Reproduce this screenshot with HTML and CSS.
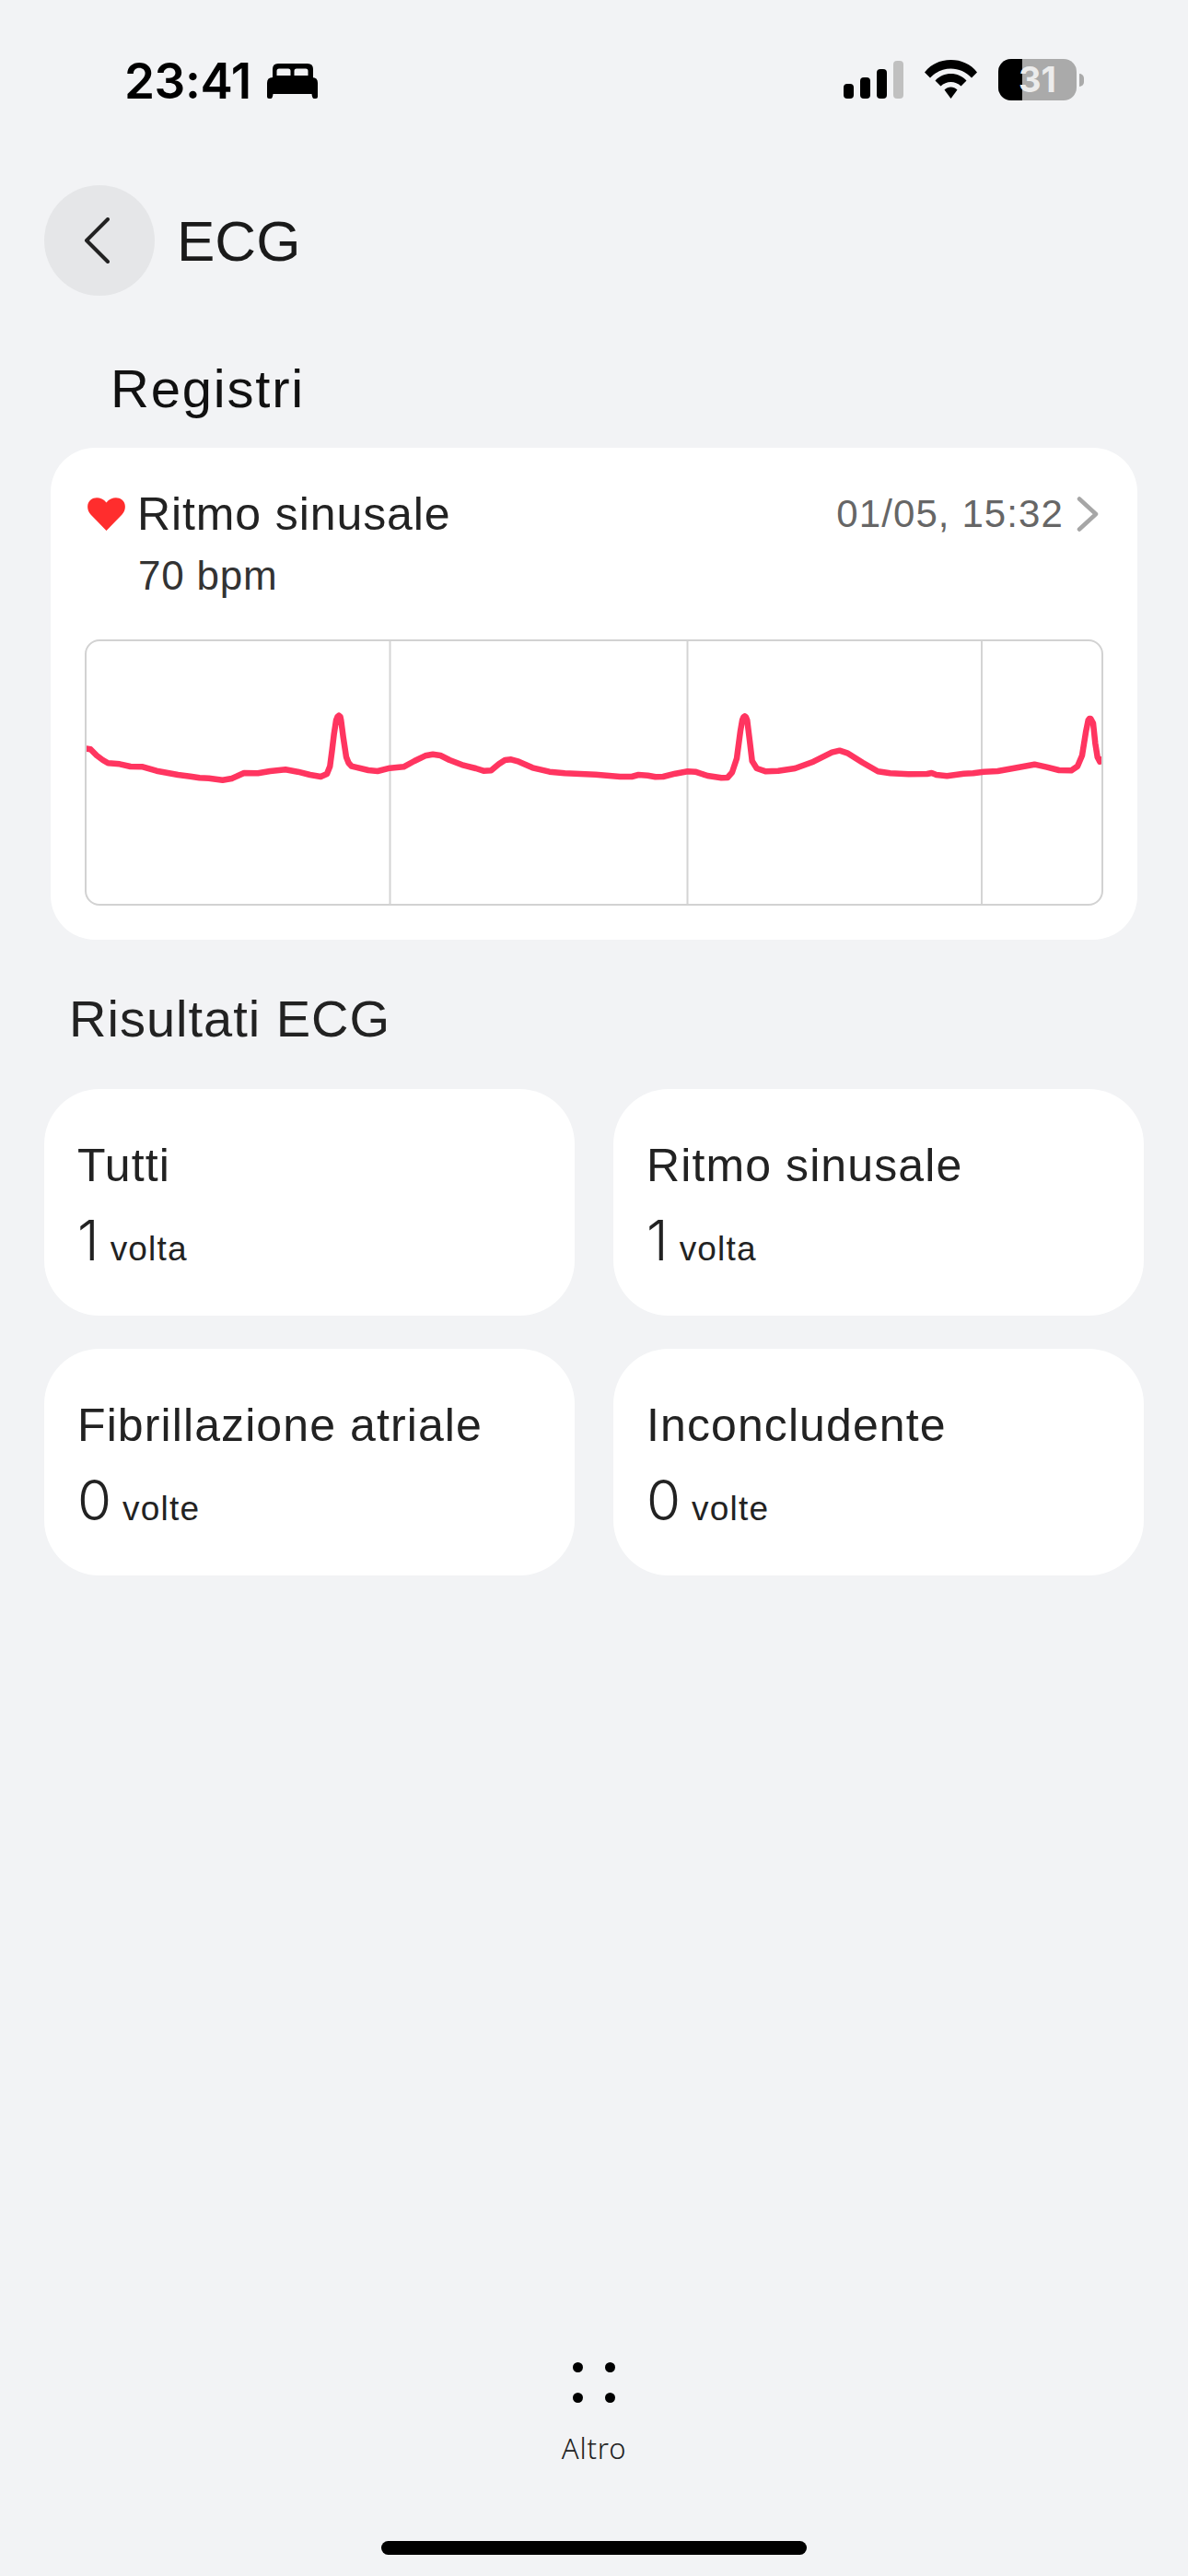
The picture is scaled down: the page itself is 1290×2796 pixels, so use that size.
FILE: index.html
```html
<!DOCTYPE html>
<html lang="it">
<head>
<meta charset="utf-8">
<title>ECG</title>
<link rel="stylesheet" href="styles.css">
</head>
<body>
<div class="page">
  <div class="status">
    <div class="status-left">
      <span class="time">23:41</span>
      <svg class="bed" viewBox="0 0 55 38"><path fill-rule="evenodd" d="M12 0H44Q50 0 50 6V16H6V6Q6 0 12 0ZM13 5.500Q10.500 5.500 10.500 8V13H25.500V8Q25.500 5.500 23 5.500ZM32 5.500Q29.500 5.500 29.500 8V13H44.500V8Q44.500 5.500 42 5.500Z"/><path d="M6 15H49Q55 15 55 21V36Q55 38 53 38H51Q49 38 48.500 33H6.500Q6 38 4 38H2Q0 38 0 36V21Q0 15 6 15Z"/></svg>
    </div>
    <div class="status-right">
      <div class="signal">
        <span class="bar b1"></span><span class="bar b2"></span><span class="bar b3"></span><span class="bar b4"></span>
      </div>
      <svg class="wifi" viewBox="0 0 57 42"><path d="M28.500 0C40 0 50 4.500 57 13.500L51 19.500C45 13 37 9.500 28.500 9.500C20 9.500 12 13 6 19.500L0 13.500C7 4.500 17 0 28.500 0Z"/><path d="M28.500 15C35 15 41 17.500 45.500 22.500L39.500 28.500C36.500 25.500 32.500 24 28.500 24C24.500 24 20.500 25.500 17.500 28.500L11.500 22.500C16 17.500 22 15 28.500 15Z"/><path d="M28.500 29.500C31 29.500 33.500 30.500 35.500 32.500L28.500 42L21.500 32.500C23.500 30.500 26 29.500 28.500 29.500Z"/></svg>
      <div class="battery">
        <div class="batt-body"><span class="batt-fill"></span><span class="batt-num">31</span></div>
        <span class="batt-nub"></span>
      </div>
    </div>
  </div>

  <header class="header">
    <button class="back"><svg class="back-icon" viewBox="0 0 28 50"><path d="M26 2L3 25L26 48"/></svg></button>
    <h1 class="title">ECG</h1>
  </header>

  <h2 class="records-title">Registri</h2>

  <section class="record">
    <div class="record-head">
      <div class="record-main">
        <svg class="heart" viewBox="0 0 41 36"><path d="M20.500 36L3.500 18.500C-1 13.500 -1 6 3.500 2.500C8 -1 15.500 -0.500 20.500 5.500C25.500 -0.500 33 -1 37.500 2.500C42 6 42 13.500 37.500 18.500Z"/></svg>
        <span class="record-name">Ritmo sinusale</span>
      </div>
      <div class="record-side">
        <span class="record-date">01/05, 15:32</span>
        <svg class="chev" viewBox="0 0 24 38"><path d="M3 2.500L21 19L3 35.500"/></svg>
      </div>
    </div>
    <div class="record-bpm">70 bpm</div>
    <div class="chart">
      <svg class="chart-svg" viewBox="92 694 1106 289">
        <path class="grid" d="M423.500 695V982M746.500 695V982M1066 695V982"/>
        <polyline class="trace" points="90,812 98.300,813.300 105,820 111.700,825 117.300,828.300 130,829.300 141.700,832 155,832.300 170,836.700 193.300,841 206.700,842.700 216.700,844.300 226.700,844.700 241.700,846.700 251.700,845 258.300,842 265,839 280,839.300 293.300,837 310,835.300 323.300,837.700 336.700,841 348.300,843 355,840 358.300,831.700 360.500,815 362.700,796.700 365,781.700 366.500,778 368,776.700 369.500,778 370.300,781.700 372.700,800 376,821.700 378.500,828 381.700,831.700 400,836 410,837 423.300,833.700 438.300,832.300 450,826 461.700,820.300 470,818.700 478.300,820 488.300,825 503.300,830.700 516.700,834 525,836.700 533.300,836.300 541.700,829.300 548.300,825 555,824.300 563.300,826.700 578.300,833.300 596.700,837.700 613.300,839.300 646.700,840.700 673.300,843 686,843 693.300,841 703.300,841.700 711.700,843.300 720,843 733.300,839.700 746.700,837.300 755,837.700 768.300,842 783.300,844.300 790,844 795,838.300 800,823.300 804,793.300 806,781.700 807.300,778.300 808.700,777.300 810,778.300 811.300,781.700 814,803.300 816.700,826 821.700,834 831.700,837.300 845,836.700 863.300,834 883.300,826.700 903.300,816.700 911.700,814.700 920,817.300 936.700,827.700 953.300,837.300 966.700,839.300 986.700,840.300 1006.700,840 1011.700,839 1016.700,841 1028.300,842.300 1046.700,839.700 1056.700,839.300 1068.300,837.700 1083.300,837 1100,834 1123.300,829.700 1136.700,832.700 1150,836 1163.300,836.300 1170,831.700 1175,820 1179.300,793.300 1181.700,781.700 1183,780 1184.300,780 1187,785 1189.300,806.700 1191.700,821.700 1194.300,826.700 1196.700,824"/>
      </svg>
    </div>
  </section>

  <h2 class="results-title">Risultati ECG</h2>

  <section class="results">
    <div class="result-card">
      <div class="result-name">Tutti</div>
      <div class="result-value"><span class="num">1</span><span class="unit">volta</span></div>
    </div>
    <div class="result-card">
      <div class="result-name">Ritmo sinusale</div>
      <div class="result-value"><span class="num">1</span><span class="unit">volta</span></div>
    </div>
    <div class="result-card">
      <div class="result-name">Fibrillazione atriale</div>
      <div class="result-value"><span class="num">0</span><span class="unit">volte</span></div>
    </div>
    <div class="result-card">
      <div class="result-name">Inconcludente</div>
      <div class="result-value"><span class="num">0</span><span class="unit">volte</span></div>
    </div>
  </section>

  <footer class="footer">
    <div class="dots"><span class="dot"></span><span class="dot"></span><span class="dot"></span><span class="dot"></span></div>
    <div class="more">Altro</div>
    <div class="home-bar"></div>
  </footer>
</div>
</body>
</html>
```

FILE: styles.css
```css
* { box-sizing: border-box; }
html, body { margin: 0; padding: 0; }
body { background: #f2f3f5; font-family: "Liberation Sans", Arial, sans-serif; color: #222; }
.page { width: 1290px; height: 2796px; display: flex; flex-direction: column; overflow: hidden; }

.status { height: 110px; padding: 64px 113px 0 135px; display: flex; justify-content: space-between; align-items: flex-start; }
.status-left { display: flex; align-items: flex-start; }
.time { font-family: Inter, sans-serif; font-weight: 600; font-size: 53px; line-height: 48px; letter-spacing: -0.400px; color: #000; }
.bed { width: 55px; height: 38px; margin: 5px 0 0 17px; fill: #000; }
.status-right { display: flex; align-items: flex-start; height: 46px; }
.signal { display: flex; align-items: flex-end; gap: 7px; width: 65px; height: 43px; margin-right: 23px; }
.bar { width: 11px; background: #000; border-radius: 4px; }
.b1 { height: 16px; }
.b2 { height: 23px; }
.b3 { height: 32px; }
.b4 { height: 41px; background: #c0c0c0; }
.wifi { width: 57px; height: 42px; margin: 1px 23px 0 0; fill: #000; }
.battery { display: flex; align-items: center; gap: 3px; height: 45px; }
.batt-body { position: relative; width: 85px; height: 45px; border-radius: 14px; background: #aaaaaa; overflow: hidden; display: flex; align-items: center; justify-content: center; }
.batt-fill { position: absolute; left: 0; top: 0; bottom: 0; width: 26px; background: #000; }
.batt-num { position: relative; font-family: Inter, sans-serif; font-weight: 700; font-size: 38px; line-height: 45px; color: #ececec; }
.batt-nub { width: 5px; height: 14px; background: #aaaaaa; border-radius: 0 5px 5px 0; }

.header { margin-top: 91px; padding-left: 48px; display: flex; align-items: center; gap: 24px; height: 120px; }
.back { width: 120px; height: 120px; border: 0; padding: 0; border-radius: 50%; background: #e5e6e8; display: flex; align-items: center; justify-content: center; }
.back-icon { width: 28px; height: 50px; margin-right: 7px; fill: none; stroke: #222; stroke-width: 4; stroke-linecap: round; stroke-linejoin: round; }
.title { margin: 2px 0 0; font-weight: 400; font-size: 62px; line-height: 70px; color: #1a1a1a; }

.records-title { margin: 70px 0 0 120px; height: 62px; font-weight: 400; font-size: 58px; line-height: 62px; letter-spacing: 1.800px; color: #111; }
.record { margin: 33px 55px 0 55px; height: 534px; background: #fff; border-radius: 48px; padding: 48px 37px 37px 37px; display: flex; flex-direction: column; }
.record-head { display: flex; justify-content: space-between; align-items: center; height: 48px; }
.record-main { display: flex; align-items: center; gap: 13px; padding-left: 3px; }
.heart { width: 41px; height: 36px; fill: #ff2d2d; }
.record-name { font-size: 50px; line-height: 48px; letter-spacing: 0.900px; color: #222; }
.record-side { display: flex; align-items: center; gap: 14px; padding-right: 5px; }
.record-date { font-size: 42px; line-height: 48px; letter-spacing: 1.100px; color: #666; }
.chev { width: 24px; height: 38px; fill: none; stroke: #a6a6a6; stroke-width: 4.500; stroke-linecap: round; stroke-linejoin: round; }
.record-bpm { margin: 19px 0 0 58px; font-size: 44px; line-height: 48px; letter-spacing: 0.800px; color: #333; }
.chart { position: relative; margin-top: 45px; height: 289px; border: 2px solid #d2d2d2; border-radius: 16px; overflow: hidden; }
.chart-svg { position: absolute; left: -2px; top: -2px; width: 1106px; height: 289px; display: block; }
.grid { fill: none; stroke: #d4d4d4; stroke-width: 2; }
.trace { fill: none; stroke: #ff3560; stroke-width: 6.500; stroke-linecap: round; stroke-linejoin: round; }

.results-title { margin: 55px 0 0 75px; height: 62px; font-weight: 400; font-size: 56px; line-height: 62px; letter-spacing: 1px; color: #222; }
.results { margin: 45px 48px 0 48px; display: grid; grid-template-columns: 576px 576px; column-gap: 42px; row-gap: 36px; }
.result-card { height: 246px; background: #fff; border-radius: 60px; padding: 55px 36px 0 36px; }
.result-name { font-size: 50px; line-height: 56px; letter-spacing: 1.100px; color: #222; }
.result-value { margin-top: 21px; display: flex; align-items: baseline; gap: 12px; color: #222; }
.num { font-family: Inter, sans-serif; font-weight: 300; font-size: 60px; line-height: 64px; }
.unit { font-size: 37px; line-height: 64px; letter-spacing: 1.200px; }

.footer { margin-top: auto; height: 240px; display: flex; flex-direction: column; align-items: center; padding-top: 8px; }
.dots { display: grid; grid-template-columns: 11px 11px; column-gap: 24px; row-gap: 22px; }
.dot { width: 11px; height: 11px; border-radius: 50%; background: #000; }
.more { margin-top: 29px; font-family: "Noto Sans", sans-serif; font-weight: 300; font-size: 31px; line-height: 40px; letter-spacing: 0.800px; color: #222; }
.home-bar { margin-top: 81px; width: 462px; height: 15px; border-radius: 8px; background: #000; }
```
